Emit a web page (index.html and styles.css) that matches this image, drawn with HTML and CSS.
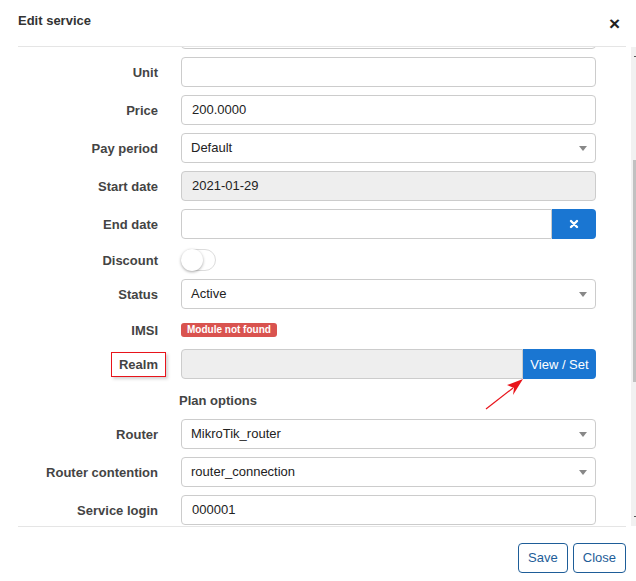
FILE: index.html
```html
<!DOCTYPE html>
<html>
<head>
<meta charset="utf-8">
<link rel="stylesheet" href="styles.css">
</head>
<body>
<div class="modal">
  <div class="header">
    <h4 class="title">Edit service</h4>
    <span class="close">&#215;</span>
  </div>
  <div class="rule"></div>
  <div class="body">
    <div class="viewport">
      <div class="form">
        <div class="row"><span class="label"></span><div class="input"></div></div>
        <div class="row"><span class="label">Unit</span><div class="input"></div></div>
        <div class="row"><span class="label">Price</span><div class="input">200.0000</div></div>
        <div class="row"><span class="label">Pay period</span><div class="input select">Default<span class="caret"></span></div></div>
        <div class="row"><span class="label">Start date</span><div class="input disabled">2021-01-29</div></div>
        <div class="row"><span class="label">End date</span>
          <div class="group"><div class="input grow left"></div><span class="btn-blue btn-x"><svg width="10" height="10" viewBox="0 0 10 10"><path d="M2 2L8 8M8 2L2 8" stroke="#fff" stroke-width="2.4" stroke-linecap="round"/></svg></span></div>
        </div>
        <div class="row short"><span class="label">Discount</span><div><span class="toggle"><span class="knob"></span></span></div></div>
        <div class="row"><span class="label">Status</span><div class="input select">Active<span class="caret"></span></div></div>
        <div class="row short"><span class="label">IMSI</span><div><span class="badge">Module not found</span></div></div>
        <div class="row"><span class="label"><span class="hl">Realm</span></span>
          <div class="group"><div class="input disabled grow left"></div><span class="btn-blue btn-view">View / Set</span></div>
        </div>
        <div class="row short"><span class="label"></span><div class="section">Plan options</div></div>
        <div class="row"><span class="label">Router</span><div class="input select">MikroTik_router<span class="caret"></span></div></div>
        <div class="row"><span class="label">Router contention</span><div class="input select">router_connection<span class="caret"></span></div></div>
        <div class="row"><span class="label">Service login</span><div class="input">000001</div></div>
      </div>
    </div>
    <div class="scrollbar">
      <span class="arrow-up"></span>
      <span class="thumb"></span>
      <span class="arrow-down"></span>
    </div>
  </div>
  <div class="rule"></div>
  <div class="footer">
    <span class="btn-outline">Save</span>
    <span class="btn-outline">Close</span>
  </div>
  <svg class="pointer" width="50" height="40" viewBox="0 0 50 40">
    <line x1="5" y1="34" x2="32" y2="13" stroke="#e8141b" stroke-width="1.2"/>
    <path d="M42 4 L26 10 L33 13 L32 20 Z" fill="#e8141b"/>
  </svg>
</div>
</body>
</html>
```
FILE: styles.css
```css
* { box-sizing: border-box; }
html, body { margin: 0; padding: 0; background: #fff; }
body {
  font-family: "Liberation Sans", Arial, sans-serif;
  font-size: 13px;
  color: #333;
}
.modal {
  position: relative;
  width: 636px;
  height: 581px;
  display: flex;
  flex-direction: column;
  overflow: hidden;
}
.header {
  height: 46px;
  display: flex;
  justify-content: space-between;
  align-items: flex-start;
  padding: 13px 16px 0 18px;
}
.title {
  margin: 0;
  font-size: 13px;
  font-weight: bold;
  line-height: 15px;
  color: #333;
}
.close {
  font-size: 19px;
  font-weight: bold;
  line-height: 19px;
  margin-top: 1px;
  color: #222;
}
.rule {
  height: 1px;
  background: #e5e5e5;
  margin: 0 10px 0 18px;
}
.body {
  height: 479px;
  display: flex;
}
.viewport {
  width: 631px;
  overflow: hidden;
}
.form {
  display: flex;
  flex-direction: column;
  gap: 8px;
  margin-top: -28px;
  padding-left: 18px;
}
.row {
  display: grid;
  grid-template-columns: 140px 415px;
  column-gap: 23px;
  align-items: center;
  height: 30px;
}
.row.short { height: 24px; }
.row.short .label, .row.short .section { padding-top: 3px; }
.label {
  text-align: right;
  font-weight: bold;
  color: #444;
}
.input {
  position: relative;
  height: 30px;
  border: 1px solid #ccc;
  border-radius: 4px;
  padding: 0 10px;
  line-height: 28px;
  color: #222;
  background: #fff;
}
.input.select { padding-left: 9px; }
.input.disabled { background: #eee; }
.caret {
  position: absolute;
  right: 8px;
  top: 12px;
  border-left: 4.5px solid transparent;
  border-right: 4.5px solid transparent;
  border-top: 5px solid #888;
}
.group { display: flex; }
.grow { flex: 1; }
.left { border-radius: 4px 0 0 4px; }
.btn-blue {
  background: #1a76d2;
  color: #fff;
  height: 30px;
  border-radius: 0 4px 4px 0;
  display: flex;
  align-items: center;
  justify-content: center;
}
.btn-x { width: 44px; }
.btn-view { width: 73px; }
.toggle {
  display: block;
  width: 35px;
  height: 22px;
  margin-top: 1px;
  border: 1px solid #dcdcdc;
  border-radius: 11px;
  position: relative;
  background: #fff;
}
.knob {
  position: absolute;
  left: -1px;
  top: -1px;
  width: 22px;
  height: 22px;
  border-radius: 50%;
  background: #fff;
  box-shadow: 0 1px 3px rgba(0,0,0,0.35);
}
.badge {
  display: inline-block;
  background: #d9534f;
  color: #fff;
  font-size: 10px;
  font-weight: bold;
  line-height: 14px;
  padding: 0 6px;
  border-radius: 3px;
  vertical-align: middle;
}
.hl {
  display: inline-block;
  border: 1px solid #e8141b;
  padding: 4px 7px 4px 7px;
  margin-right: -8px;
  box-shadow: 2px 2px 3px rgba(0,0,0,0.18);
}
.section {
  font-weight: bold;
  color: #444;
  margin-left: -2px;
}
.scrollbar {
  width: 5px;
  background: #f1f1f1;
  position: relative;
  display: flex;
  flex-direction: column;
}
.arrow-up, .arrow-down {
  display: block;
  width: 2px;
  height: 1px;
  background: #555;
  margin-left: 3px;
}
.arrow-up { margin-top: 9px; }
.thumb {
  display: block;
  width: 3px;
  height: 222px;
  background: #c1c1c1;
  margin: 103px 0 0 2px;
}
.arrow-down { margin-top: 134px; }
.footer {
  display: flex;
  justify-content: flex-end;
  gap: 5px;
  padding: 16px 10px 0 0;
}
.btn-outline {
  height: 30px;
  padding: 0 9px;
  border: 1px solid #1e5d98;
  border-radius: 4px;
  color: #1e5d98;
  line-height: 28px;
}
.pointer {
  position: absolute;
  left: 481px;
  top: 375px;
}
```
